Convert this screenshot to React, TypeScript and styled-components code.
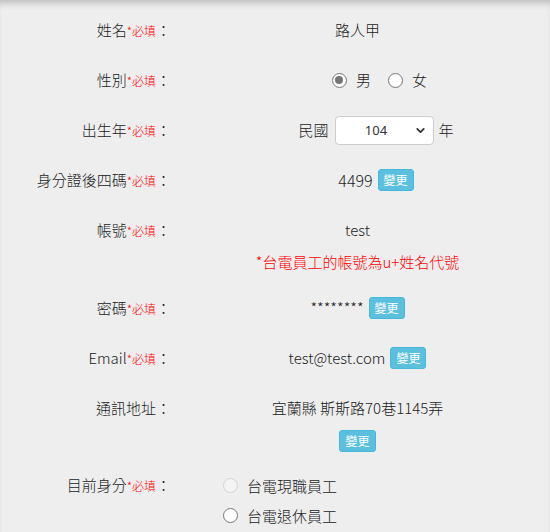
import styled, { createGlobalStyle } from 'styled-components';
import { ChevronDown } from 'lucide-react';

const GlobalStyle = createGlobalStyle`
  html, body {
    margin: 0;
    padding: 0;
    background: #eeeeee;
  }
  body {
    font-family: "Noto Sans CJK TC", "Noto Sans", sans-serif;
    font-weight: 300;
    color: #222;
  }
`;

const Radio = ({ checked, disabled }: { checked?: boolean; disabled?: boolean }) => (
  <RadioCircle $checked={checked} $disabled={disabled}>
    {checked && <RadioDot />}
  </RadioCircle>
);

const Field = ({ label, required }: { label: string; required?: boolean }) => (
  <Label>
    {label}
    {required && <Required>*必填</Required>}
    ：
  </Label>
);

const App = () => {
  return (
    <Page>
      <GlobalStyle />
      <Row>
        <Field label='姓名' required />
        <Value>路人甲</Value>
      </Row>

      <Row>
        <Field label='性別' required />
        <Value>
          <Inline $shift={44}>
            <Option>
              <Radio checked />
              <span>男</span>
            </Option>
            <Option>
              <Radio />
              <span>女</span>
            </Option>
          </Inline>
        </Value>
      </Row>

      <Row>
        <Field label='出生年' required />
        <Value>
          <Inline $shift={37} $gap={5}>
            <span>民國</span>
            <SelectWrap>
              <YearSelect defaultValue='104'>
                <option value='104'>104</option>
              </YearSelect>
              <Chevron size={13} strokeWidth={3.4} />
            </SelectWrap>
            <span>年</span>
          </Inline>
        </Value>
      </Row>

      <Row>
        <Field label='身分證後四碼' required />
        <Value>
          <Inline $shift={37}>
            <Digits>4499</Digits>
            <ChangeButton>變更</ChangeButton>
          </Inline>
        </Value>
      </Row>

      <Row $top>
        <Field label='帳號' required />
        <Value>
          <span>test</span>
          <Note>*台電員工的帳號為u+姓名代號</Note>
        </Value>
      </Row>

      <Row>
        <Field label='密碼' required />
        <Value>
          <Inline>
            <span>********</span>
            <ChangeButton>變更</ChangeButton>
          </Inline>
        </Value>
      </Row>

      <Row>
        <Field label='Email' required />
        <Value>
          <Inline>
            <span>test@test.com</span>
            <ChangeButton>變更</ChangeButton>
          </Inline>
        </Value>
      </Row>

      <Row $top>
        <Field label='通訊地址' />
        <Value>
          <span>宜蘭縣 斯斯路70巷1145弄</span>
          <StackedButton>變更</StackedButton>
        </Value>
      </Row>

      <Row $top>
        <Field label='目前身分' required />
        <Choices>
          <Choice>
            <Radio disabled />
            <span>台電現職員工</span>
          </Choice>
          <Choice>
            <Radio />
            <span>台電退休員工</span>
          </Choice>
        </Choices>
      </Row>
    </Page>
  );
};

export default App;

const Page = styled.div`
  min-height: 532px;
  padding-top: 5px;
  box-sizing: border-box;
  background: #eeeeee;
  box-shadow: inset 0 7px 7px -4px rgba(0, 0, 0, 0.22);
`;

const Row = styled.div<{ $top?: boolean }>`
  display: grid;
  grid-template-columns: 171px 1fr;
  align-items: ${(p) => (p.$top ? 'start' : 'center')};
  min-height: 50px;
  padding: ${(p) => (p.$top ? '10px 0 10px' : '0')};
  box-sizing: border-box;
  font-size: 15px;
`;

const Label = styled.div`
  text-align: right;
  line-height: 30px;
  white-space: nowrap;
`;

const Required = styled.span`
  color: #ff0000;
  font-size: 12px;
`;

const Value = styled.div`
  display: flex;
  flex-direction: column;
  align-items: center;
  padding: 0 13px 0 7px;
  line-height: 30px;
`;

const Inline = styled.div<{ $shift?: number; $gap?: number }>`
  display: flex;
  align-items: center;
  gap: ${(p) => p.$gap ?? 5}px;
  padding-left: ${(p) => p.$shift ?? 0}px;
`;

const Digits = styled.span`
  font-size: 16px;
`;

const Option = styled.label`
  display: flex;
  align-items: center;
  gap: 9px;
  margin-right: 12px;

  &:last-child {
    margin-right: 0;
  }
`;

const RadioCircle = styled.span<{ $checked?: boolean; $disabled?: boolean }>`
  display: inline-flex;
  align-items: center;
  justify-content: center;
  width: 15px;
  height: 15px;
  box-sizing: border-box;
  border-radius: 50%;
  border: 1.5px solid ${(p) => (p.$disabled ? '#d2d2d2' : '#767676')};
  background: ${(p) => (p.$disabled ? '#f4f4f4' : '#fff')};
`;

const RadioDot = styled.span`
  width: 8px;
  height: 8px;
  border-radius: 50%;
  background: #767676;
`;

const SelectWrap = styled.div`
  position: relative;
  display: flex;
  margin-left: 1px;
`;

const YearSelect = styled.select`
  appearance: none;
  width: 99px;
  height: 29px;
  padding: 0 16px 0 0;
  border: 1px solid #cccccc;
  border-radius: 4px;
  background: #fff;
  color: #333;
  font: 13px "Noto Sans", sans-serif;
  text-align: center;
  text-align-last: center;
`;

const Chevron = styled(ChevronDown)`
  position: absolute;
  right: 7px;
  top: 8px;
  color: #333;
  pointer-events: none;
`;

const ChangeButton = styled.button`
  height: 22px;
  padding: 0 5px;
  border: 1px solid #46b8da;
  border-radius: 3px;
  background: #5bc0de;
  color: #fff;
  font: 400 12px "Noto Sans CJK TC", sans-serif;
  line-height: 20px;
  cursor: pointer;
`;

const StackedButton = styled(ChangeButton)`
  margin: 7px 0 -2px;
`;

const Note = styled.div`
  color: #ff0000;
  line-height: 20px;
  margin: 7px 0 1px;
`;

const Choices = styled.div`
  display: flex;
  flex-direction: column;
  padding-left: 52px;
`;

const Choice = styled.label`
  display: flex;
  align-items: center;
  gap: 9px;
  height: 30px;
`;
